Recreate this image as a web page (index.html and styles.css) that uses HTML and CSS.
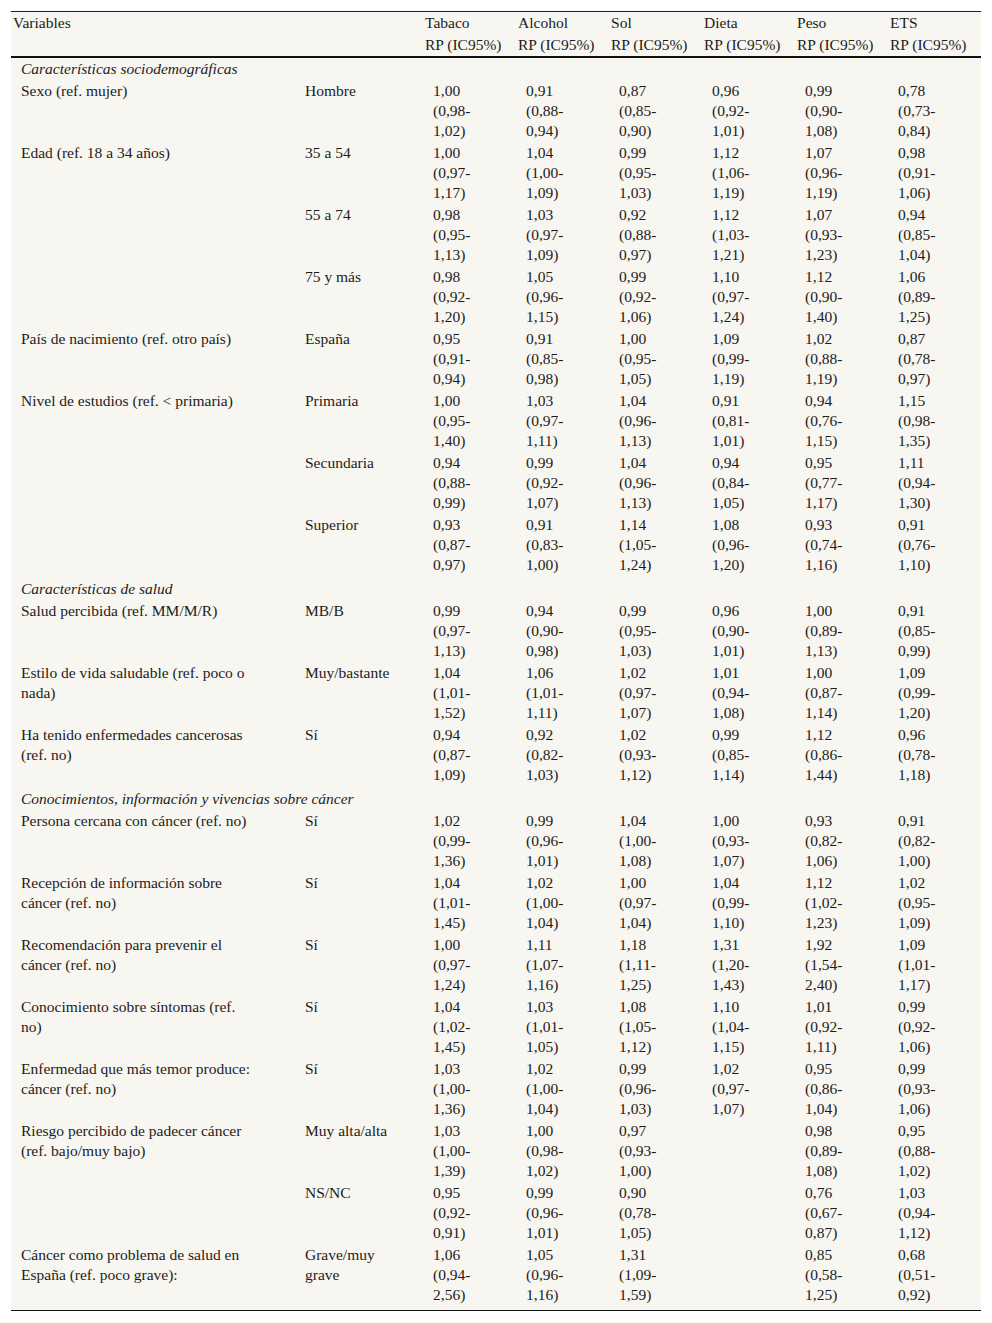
FILE: index.html
```html
<!DOCTYPE html>
<html lang="es">
<head>
<meta charset="utf-8">
<title>Tabla RP</title>
<link rel="stylesheet" href="styles.css">
</head>
<body>
<div class="wrap">
<table class="rp">
<colgroup>
<col class="c-var"><col class="c-cat"><col class="c-num"><col class="c-num"><col class="c-num"><col class="c-num"><col class="c-num"><col class="c-num">
</colgroup>
<thead>
<tr>
<th colspan="2">Variables</th>
<th>Tabaco<br>RP (IC95%)</th>
<th>Alcohol<br>RP (IC95%)</th>
<th>Sol<br>RP (IC95%)</th>
<th>Dieta<br>RP (IC95%)</th>
<th>Peso<br>RP (IC95%)</th>
<th>ETS<br>RP (IC95%)</th>
</tr>
</thead>
<tbody>
<tr class="sec first"><td colspan="8">Características sociodemográficas</td></tr>
<tr><td>Sexo (ref. mujer)</td><td>Hombre</td><td>1,00<br>(0,98-<br>1,02)</td><td>0,91<br>(0,88-<br>0,94)</td><td>0,87<br>(0,85-<br>0,90)</td><td>0,96<br>(0,92-<br>1,01)</td><td>0,99<br>(0,90-<br>1,08)</td><td>0,78<br>(0,73-<br>0,84)</td></tr>
<tr><td>Edad (ref. 18 a 34 años)</td><td>35 a 54</td><td>1,00<br>(0,97-<br>1,17)</td><td>1,04<br>(1,00-<br>1,09)</td><td>0,99<br>(0,95-<br>1,03)</td><td>1,12<br>(1,06-<br>1,19)</td><td>1,07<br>(0,96-<br>1,19)</td><td>0,98<br>(0,91-<br>1,06)</td></tr>
<tr><td></td><td>55 a 74</td><td>0,98<br>(0,95-<br>1,13)</td><td>1,03<br>(0,97-<br>1,09)</td><td>0,92<br>(0,88-<br>0,97)</td><td>1,12<br>(1,03-<br>1,21)</td><td>1,07<br>(0,93-<br>1,23)</td><td>0,94<br>(0,85-<br>1,04)</td></tr>
<tr><td></td><td>75 y más</td><td>0,98<br>(0,92-<br>1,20)</td><td>1,05<br>(0,96-<br>1,15)</td><td>0,99<br>(0,92-<br>1,06)</td><td>1,10<br>(0,97-<br>1,24)</td><td>1,12<br>(0,90-<br>1,40)</td><td>1,06<br>(0,89-<br>1,25)</td></tr>
<tr><td>País de nacimiento (ref. otro país)</td><td>España</td><td>0,95<br>(0,91-<br>0,94)</td><td>0,91<br>(0,85-<br>0,98)</td><td>1,00<br>(0,95-<br>1,05)</td><td>1,09<br>(0,99-<br>1,19)</td><td>1,02<br>(0,88-<br>1,19)</td><td>0,87<br>(0,78-<br>0,97)</td></tr>
<tr><td>Nivel de estudios (ref. &lt; primaria)</td><td>Primaria</td><td>1,00<br>(0,95-<br>1,40)</td><td>1,03<br>(0,97-<br>1,11)</td><td>1,04<br>(0,96-<br>1,13)</td><td>0,91<br>(0,81-<br>1,01)</td><td>0,94<br>(0,76-<br>1,15)</td><td>1,15<br>(0,98-<br>1,35)</td></tr>
<tr><td></td><td>Secundaria</td><td>0,94<br>(0,88-<br>0,99)</td><td>0,99<br>(0,92-<br>1,07)</td><td>1,04<br>(0,96-<br>1,13)</td><td>0,94<br>(0,84-<br>1,05)</td><td>0,95<br>(0,77-<br>1,17)</td><td>1,11<br>(0,94-<br>1,30)</td></tr>
<tr><td></td><td>Superior</td><td>0,93<br>(0,87-<br>0,97)</td><td>0,91<br>(0,83-<br>1,00)</td><td>1,14<br>(1,05-<br>1,24)</td><td>1,08<br>(0,96-<br>1,20)</td><td>0,93<br>(0,74-<br>1,16)</td><td>0,91<br>(0,76-<br>1,10)</td></tr>
<tr class="sec"><td colspan="8">Características de salud</td></tr>
<tr><td>Salud percibida (ref. MM/M/R)</td><td>MB/B</td><td>0,99<br>(0,97-<br>1,13)</td><td>0,94<br>(0,90-<br>0,98)</td><td>0,99<br>(0,95-<br>1,03)</td><td>0,96<br>(0,90-<br>1,01)</td><td>1,00<br>(0,89-<br>1,13)</td><td>0,91<br>(0,85-<br>0,99)</td></tr>
<tr><td>Estilo de vida saludable (ref. poco o<br>nada)</td><td>Muy/bastante</td><td>1,04<br>(1,01-<br>1,52)</td><td>1,06<br>(1,01-<br>1,11)</td><td>1,02<br>(0,97-<br>1,07)</td><td>1,01<br>(0,94-<br>1,08)</td><td>1,00<br>(0,87-<br>1,14)</td><td>1,09<br>(0,99-<br>1,20)</td></tr>
<tr><td>Ha tenido enfermedades cancerosas<br>(ref. no)</td><td>Sí</td><td>0,94<br>(0,87-<br>1,09)</td><td>0,92<br>(0,82-<br>1,03)</td><td>1,02<br>(0,93-<br>1,12)</td><td>0,99<br>(0,85-<br>1,14)</td><td>1,12<br>(0,86-<br>1,44)</td><td>0,96<br>(0,78-<br>1,18)</td></tr>
<tr class="sec"><td colspan="8">Conocimientos, información y vivencias sobre cáncer</td></tr>
<tr><td>Persona cercana con cáncer (ref. no)</td><td>Sí</td><td>1,02<br>(0,99-<br>1,36)</td><td>0,99<br>(0,96-<br>1,01)</td><td>1,04<br>(1,00-<br>1,08)</td><td>1,00<br>(0,93-<br>1,07)</td><td>0,93<br>(0,82-<br>1,06)</td><td>0,91<br>(0,82-<br>1,00)</td></tr>
<tr><td>Recepción de información sobre<br>cáncer (ref. no)</td><td>Sí</td><td>1,04<br>(1,01-<br>1,45)</td><td>1,02<br>(1,00-<br>1,04)</td><td>1,00<br>(0,97-<br>1,04)</td><td>1,04<br>(0,99-<br>1,10)</td><td>1,12<br>(1,02-<br>1,23)</td><td>1,02<br>(0,95-<br>1,09)</td></tr>
<tr><td>Recomendación para prevenir el<br>cáncer (ref. no)</td><td>Sí</td><td>1,00<br>(0,97-<br>1,24)</td><td>1,11<br>(1,07-<br>1,16)</td><td>1,18<br>(1,11-<br>1,25)</td><td>1,31<br>(1,20-<br>1,43)</td><td>1,92<br>(1,54-<br>2,40)</td><td>1,09<br>(1,01-<br>1,17)</td></tr>
<tr><td>Conocimiento sobre síntomas (ref.<br>no)</td><td>Sí</td><td>1,04<br>(1,02-<br>1,45)</td><td>1,03<br>(1,01-<br>1,05)</td><td>1,08<br>(1,05-<br>1,12)</td><td>1,10<br>(1,04-<br>1,15)</td><td>1,01<br>(0,92-<br>1,11)</td><td>0,99<br>(0,92-<br>1,06)</td></tr>
<tr><td>Enfermedad que más temor produce:<br>cáncer (ref. no)</td><td>Sí</td><td>1,03<br>(1,00-<br>1,36)</td><td>1,02<br>(1,00-<br>1,04)</td><td>0,99<br>(0,96-<br>1,03)</td><td>1,02<br>(0,97-<br>1,07)</td><td>0,95<br>(0,86-<br>1,04)</td><td>0,99<br>(0,93-<br>1,06)</td></tr>
<tr><td>Riesgo percibido de padecer cáncer<br>(ref. bajo/muy bajo)</td><td>Muy alta/alta</td><td>1,03<br>(1,00-<br>1,39)</td><td>1,00<br>(0,98-<br>1,02)</td><td>0,97<br>(0,93-<br>1,00)</td><td></td><td>0,98<br>(0,89-<br>1,08)</td><td>0,95<br>(0,88-<br>1,02)</td></tr>
<tr><td></td><td>NS/NC</td><td>0,95<br>(0,92-<br>0,91)</td><td>0,99<br>(0,96-<br>1,01)</td><td>0,90<br>(0,78-<br>1,05)</td><td></td><td>0,76<br>(0,67-<br>0,87)</td><td>1,03<br>(0,94-<br>1,12)</td></tr>
<tr class="last"><td>Cáncer como problema de salud en<br>España (ref. poco grave):</td><td>Grave/muy<br>grave</td><td>1,06<br>(0,94-<br>2,56)</td><td>1,05<br>(0,96-<br>1,16)</td><td>1,31<br>(1,09-<br>1,59)</td><td></td><td>0,85<br>(0,58-<br>1,25)</td><td>0,68<br>(0,51-<br>0,92)</td></tr>
</tbody>
</table>
</div>
</body>
</html>
```
FILE: styles.css
```css
html, body {
  margin: 0;
  padding: 0;
  background: #ffffff;
}

.wrap {
  padding: 11px;
}

.rp {
  width: 970px;
  border-collapse: collapse;
  table-layout: fixed;
  background: #f8f6f0;
  font-family: "Liberation Serif", "Times New Roman", serif;
  font-size: 15.5px;
  color: #1c1c1c;
  border-top: 1px solid #222;
  border-bottom: 1px solid #111;
}

.c-var { width: 284px; }
.c-cat { width: 128px; }
.c-num { width: 93px; }

.rp th {
  font-weight: normal;
  text-align: left;
  vertical-align: top;
  line-height: 22px;
  padding: 0 0 0 2px;
  border-bottom: 2px solid #111;
  white-space: nowrap;
}

.rp td {
  text-align: left;
  vertical-align: top;
  line-height: 20px;
  padding: 1px 4px 1px 10px;
  white-space: nowrap;
}

.rp .sec td {
  font-style: italic;
  padding-top: 3px;
}

.rp .sec.first td {
  padding-top: 1px;
}

.rp .last td {
  padding-bottom: 5px;
}
```
